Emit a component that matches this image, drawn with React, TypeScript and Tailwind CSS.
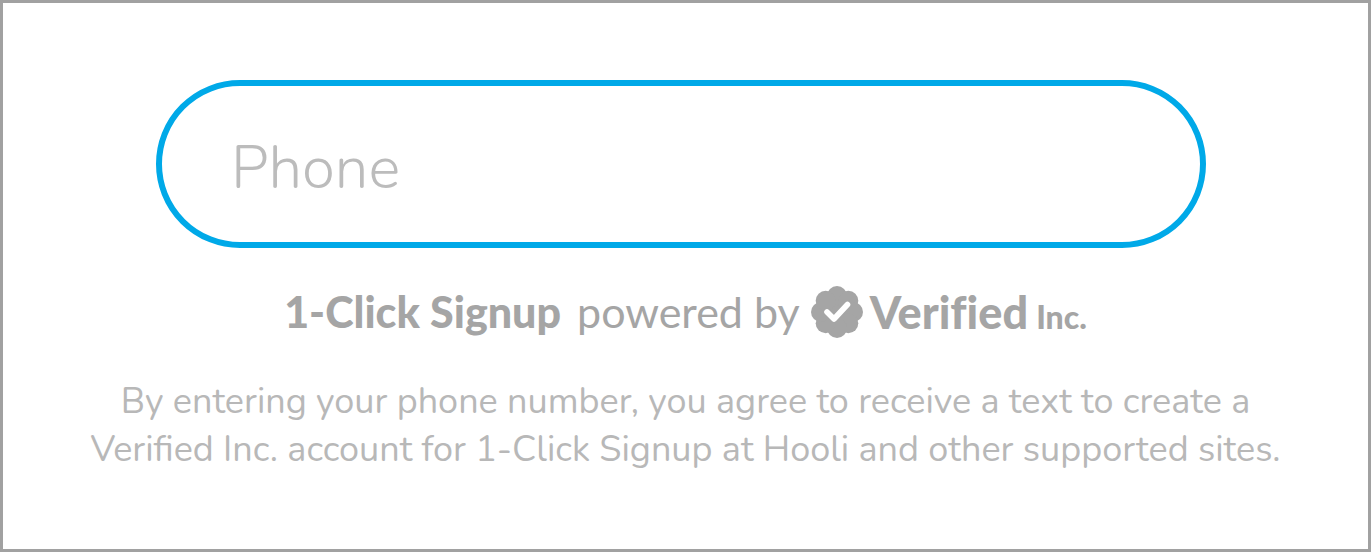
export default function App() {
  return (
    <main className="flex min-h-screen flex-col items-center border-[3px] border-[#a1a1a1] bg-white pt-[77px] pb-10 font-['Nunito','Lato','Open_Sans',sans-serif]">
      <form className="w-full pr-[162px] pl-[153px]">
        <input
          id="phone"
          type="tel"
          aria-label="Phone"
          placeholder="Phone"
          className="block h-[168px] w-full rounded-full border-[6px] border-[#00a9e8] bg-white px-[69px] pt-2 text-[60px] font-light text-gray-700 outline-none placeholder:text-[#bcbcbc]"
        />
      </form>
      <div className="mt-9 flex h-14 items-center font-['Lato',sans-serif] text-[43px] leading-[56px] whitespace-nowrap text-[#a5a5a5]">
        <span className="font-black">1-Click Signup</span>
        <span className="ml-4">powered by</span>
        <svg viewBox="0 0 54 54" className="ml-2.5 size-[54px]" aria-hidden="true">
          <g fill="currentColor">
            <circle cx="27" cy="27" r="18" />
            <circle cx="27" cy="11" r="10" />
            <circle cx="38.3" cy="15.7" r="10" />
            <circle cx="43" cy="27" r="10" />
            <circle cx="38.3" cy="38.3" r="10" />
            <circle cx="27" cy="43" r="10" />
            <circle cx="15.7" cy="38.3" r="10" />
            <circle cx="11" cy="27" r="10" />
            <circle cx="15.7" cy="15.7" r="10" />
          </g>
          <path d="M17 27l7 7 13.5-14.5" fill="none" stroke="white" strokeWidth="5.6" strokeLinecap="round" strokeLinejoin="round" />
        </svg>
        <span className="ml-1.5 flex items-baseline gap-2 font-black">
          <span className="text-[45px] [font-variant-ligatures:none]">Verified</span>
          <span className="text-[32px] leading-none">Inc.</span>
        </span>
      </div>
      <p className="mt-[38px] text-center text-[36px] leading-[48px] text-[#b8b8b8]">
        By entering your phone number, you agree to receive a text to create a
        <br />
        Verified Inc. account for 1-Click Signup at Hooli and other supported sites.
      </p>
    </main>
  );
}
